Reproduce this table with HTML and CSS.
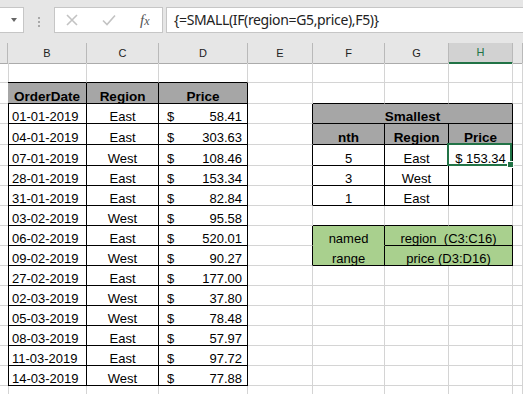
FILE: index.html
```html
<!DOCTYPE html>
<html lang="en">
<head>
  <meta charset="UTF-8">
  <title>SMALL with IF</title>
  <link rel="stylesheet" href="styles.css">
</head>
<body>
  <div class="toolbar">
    <div class="namebox"><span class="caret"></span></div>
    <div class="grip"><span></span><span></span><span></span></div>
    <div class="fxbox">
      <svg class="cancel" width="12" height="12" viewBox="0 0 12 12"><path d="M1 1L11 11M11 1L1 11" stroke="#c3c3c3" stroke-width="1.6" fill="none"/></svg>
      <svg class="enter" width="14" height="12" viewBox="0 0 14 12"><path d="M1 6.5L5 10.5L13 1.5" stroke="#c3c3c3" stroke-width="1.6" fill="none"/></svg>
      <span class="fx"><i>f</i><span>x</span></span>
    </div>
    <div class="formula">{=SMALL(IF(region=G5,price),F5)}</div>
  </div>

  <div class="row colhead">
    <div class="h"></div><div class="h">B</div><div class="h">C</div><div class="h">D</div><div class="h">E</div>
    <div class="h">F</div><div class="h">G</div><div class="h on">H</div><div class="h"></div>
  </div>

  <!-- 1 -->
  <div class="row">
    <div class="c"></div><div class="c eb"></div><div class="c eb"></div><div class="c eb"></div>
    <div class="c"></div><div class="c"></div><div class="c"></div><div class="c"></div><div class="c"></div>
  </div>
  <!-- 2 -->
  <div class="row tall">
    <div class="c er"></div><div class="c t hd">OrderDate</div><div class="c t hd">Region</div><div class="c t hd">Price</div>
    <div class="c"></div><div class="c eb"></div><div class="c eb"></div><div class="c eb"></div><div class="c"></div>
  </div>
  <!-- 3 -->
  <div class="row">
    <div class="c er"></div><div class="c t">01-01-2019</div><div class="c t ctr">East</div>
    <div class="c t num"><span>$</span><span>58.41</span></div>
    <div class="c er"></div><div class="c t hd span3">Smallest</div><div class="c"></div>
  </div>
  <!-- 4 -->
  <div class="row tall">
    <div class="c er"></div><div class="c t">04-01-2019</div><div class="c t ctr">East</div>
    <div class="c t num"><span>$</span><span>303.63</span></div>
    <div class="c er"></div><div class="c t hd">nth</div><div class="c t hd">Region</div><div class="c t hd">Price</div><div class="c"></div>
  </div>
  <!-- 5 -->
  <div class="row tall">
    <div class="c er"></div><div class="c t">07-01-2019</div><div class="c t ctr">West</div>
    <div class="c t num"><span>$</span><span>108.46</span></div>
    <div class="c er"></div><div class="c t ctr">5</div><div class="c t ctr">East</div><div class="c t ctr sel">$ 153.34</div><div class="c"></div>
  </div>
  <!-- 6 -->
  <div class="row">
    <div class="c er"></div><div class="c t">28-01-2019</div><div class="c t ctr">East</div>
    <div class="c t num"><span>$</span><span>153.34</span></div>
    <div class="c er"></div><div class="c t ctr">3</div><div class="c t ctr">West</div><div class="c t"></div><div class="c"></div>
  </div>
  <!-- 7 -->
  <div class="row">
    <div class="c er"></div><div class="c t">31-01-2019</div><div class="c t ctr">East</div>
    <div class="c t num"><span>$</span><span>82.84</span></div>
    <div class="c er"></div><div class="c t ctr">1</div><div class="c t ctr">East</div><div class="c t"></div><div class="c"></div>
  </div>
  <!-- 8 -->
  <div class="row">
    <div class="c er"></div><div class="c t">03-02-2019</div><div class="c t ctr">West</div>
    <div class="c t num"><span>$</span><span>95.58</span></div>
    <div class="c"></div><div class="c eb"></div><div class="c eb"></div><div class="c eb"></div><div class="c"></div>
  </div>
  <!-- 9 -->
  <div class="row">
    <div class="c er"></div><div class="c t">06-02-2019</div><div class="c t ctr">East</div>
    <div class="c t num"><span>$</span><span>520.01</span></div>
    <div class="c er"></div><div class="c t named merged">named</div><div class="c t named span2">region&nbsp;&nbsp;(C3:C16)</div><div class="c"></div>
  </div>
  <!-- 10 -->
  <div class="row">
    <div class="c er"></div><div class="c t">09-02-2019</div><div class="c t ctr">West</div>
    <div class="c t num"><span>$</span><span>90.27</span></div>
    <div class="c er"></div><div class="c t named">range</div><div class="c t named span2">price (D3:D16)</div><div class="c"></div>
  </div>
  <!-- 11 -->
  <div class="row">
    <div class="c er"></div><div class="c t">27-02-2019</div><div class="c t ctr">East</div>
    <div class="c t num"><span>$</span><span>177.00</span></div>
    <div class="c"></div><div class="c"></div><div class="c"></div><div class="c"></div><div class="c"></div>
  </div>
  <!-- 12 -->
  <div class="row">
    <div class="c er"></div><div class="c t">02-03-2019</div><div class="c t ctr">West</div>
    <div class="c t num"><span>$</span><span>37.80</span></div>
    <div class="c"></div><div class="c"></div><div class="c"></div><div class="c"></div><div class="c"></div>
  </div>
  <!-- 13 -->
  <div class="row">
    <div class="c er"></div><div class="c t">05-03-2019</div><div class="c t ctr">West</div>
    <div class="c t num"><span>$</span><span>78.48</span></div>
    <div class="c"></div><div class="c"></div><div class="c"></div><div class="c"></div><div class="c"></div>
  </div>
  <!-- 14 -->
  <div class="row">
    <div class="c er"></div><div class="c t">08-03-2019</div><div class="c t ctr">East</div>
    <div class="c t num"><span>$</span><span>57.97</span></div>
    <div class="c"></div><div class="c"></div><div class="c"></div><div class="c"></div><div class="c"></div>
  </div>
  <!-- 15 -->
  <div class="row">
    <div class="c er"></div><div class="c t">11-03-2019</div><div class="c t ctr">East</div>
    <div class="c t num"><span>$</span><span>97.72</span></div>
    <div class="c"></div><div class="c"></div><div class="c"></div><div class="c"></div><div class="c"></div>
  </div>
  <!-- 16 -->
  <div class="row">
    <div class="c er"></div><div class="c t">14-03-2019</div><div class="c t ctr">West</div>
    <div class="c t num"><span>$</span><span>77.88</span></div>
    <div class="c"></div><div class="c"></div><div class="c"></div><div class="c"></div><div class="c"></div>
  </div>
  <!-- 17 -->
  <div class="row">
    <div class="c"></div><div class="c"></div><div class="c"></div><div class="c"></div>
    <div class="c"></div><div class="c"></div><div class="c"></div><div class="c"></div><div class="c"></div>
  </div>
</body>
</html>
```

FILE: styles.css
```css
body {
  margin: 0;
  width: 523px;
  height: 394px;
  overflow: hidden;
  background: #fff;
  font-family: "Liberation Sans", Arial, sans-serif;
  color: #000;
}

/* formula bar */
.toolbar {
  height: 43px;
  box-sizing: border-box;
  padding-top: 7px;
  background: #e6e6e6;
  display: flex;
  align-items: flex-start;
}

.namebox {
  width: 24px;
  height: 26px;
  box-sizing: border-box;
  background: #fff;
  border: 1px solid #c6c6c6;
  border-left: none;
  display: flex;
  align-items: center;
  justify-content: flex-end;
  padding-right: 6px;
}

.caret {
  width: 0;
  height: 0;
  border-left: 3.5px solid transparent;
  border-right: 3.5px solid transparent;
  border-top: 4px solid #666;
}

.grip {
  display: flex;
  flex-direction: column;
  gap: 2px;
  margin: 10px 14px 0 14px;
}

.grip span {
  width: 2px;
  height: 2px;
  background: #a8a8a8;
}

.fxbox {
  width: 109px;
  height: 26px;
  box-sizing: border-box;
  background: #fff;
  border: 1px solid #c6c6c6;
  display: flex;
  align-items: center;
}

.cancel { margin-left: 11px; }
.enter { margin-left: 24px; }

.fx {
  margin-left: 24px;
  font-family: "Liberation Serif", serif;
  color: #555;
  font-size: 15px;
}

.fx span {
  font-size: 12px;
  font-style: italic;
}

.formula {
  flex: 1;
  height: 26px;
  margin: 0 -5px 0 3px;
  box-sizing: border-box;
  background: #fff;
  border: 1px solid #c6c6c6;
  padding: 0 7px;
  font-family: "Noto Sans", sans-serif;
  font-size: 14px;
  letter-spacing: -0.35px;
  line-height: 24px;
  color: #222;
  white-space: nowrap;
}

/* grid */
.row {
  display: grid;
  grid-template-columns: 8px 79px 72px 89px 65px 72px 64px 64px 1fr;
  height: 20px;
}

.row.tall { height: 21px; }

.colhead .h {
  background: #e6e6e6;
  border-right: 1px solid #b9b9b9;
  border-bottom: 1px solid #ababab;
  font-size: 11px;
  line-height: 20px;
  text-align: center;
  color: #222;
}

.colhead .h.on {
  background: #d2d2d2;
  color: #217346;
  border-bottom: 2px solid #217346;
  line-height: 19px;
}

.c {
  box-sizing: border-box;
  border-right: 1px solid #d4d4d4;
  border-bottom: 1px solid #d4d4d4;
  display: flex;
  align-items: flex-end;
  padding: 0 4px;
  font-size: 13px;
  line-height: 12px;
  white-space: nowrap;
}

/* black cell borders */
.t { border-right-color: #000; border-bottom-color: #000; }
.er { border-right-color: #000; }
.eb { border-bottom-color: #000; }

.hd {
  background: #a6a6a6;
  font-weight: bold;
  font-size: 13.5px;
  justify-content: center;
}

.ctr { justify-content: center; }

.num {
  justify-content: space-between;
  padding: 0 5px 0 8px;
}

.named {
  background: #a9d08e;
  justify-content: center;
}

.merged { border-bottom-color: #a9d08e; }

.span2 { grid-column: span 2; }
.span3 { grid-column: span 3; }

/* active cell */
.sel { position: relative; }

.sel::after {
  content: "";
  position: absolute;
  left: -2px;
  top: -2px;
  right: 0;
  bottom: -1px;
  border: 2px solid #217346;
}

.sel::before {
  content: "";
  position: absolute;
  right: -2px;
  bottom: -3px;
  width: 5px;
  height: 5px;
  background: #217346;
  border: 1px solid #fff;
  z-index: 1;
}
```
